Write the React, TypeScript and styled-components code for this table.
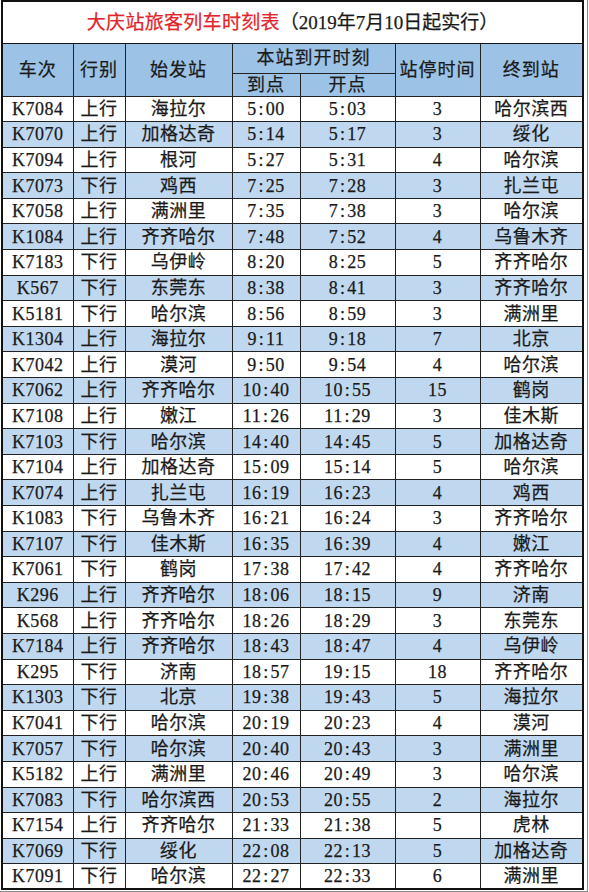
import React from 'react';
import styled, { createGlobalStyle } from 'styled-components';

type Train = [string, string, string, string, string, string, string];

const trains: Train[] = [
  ['K7084', '上行', '海拉尔', '5:00', '5:03', '3', '哈尔滨西'],
  ['K7070', '上行', '加格达奇', '5:14', '5:17', '3', '绥化'],
  ['K7094', '上行', '根河', '5:27', '5:31', '4', '哈尔滨'],
  ['K7073', '下行', '鸡西', '7:25', '7:28', '3', '扎兰屯'],
  ['K7058', '上行', '满洲里', '7:35', '7:38', '3', '哈尔滨'],
  ['K1084', '上行', '齐齐哈尔', '7:48', '7:52', '4', '乌鲁木齐'],
  ['K7183', '下行', '乌伊岭', '8:20', '8:25', '5', '齐齐哈尔'],
  ['K567', '下行', '东莞东', '8:38', '8:41', '3', '齐齐哈尔'],
  ['K5181', '下行', '哈尔滨', '8:56', '8:59', '3', '满洲里'],
  ['K1304', '上行', '海拉尔', '9:11', '9:18', '7', '北京'],
  ['K7042', '上行', '漠河', '9:50', '9:54', '4', '哈尔滨'],
  ['K7062', '上行', '齐齐哈尔', '10:40', '10:55', '15', '鹤岗'],
  ['K7108', '上行', '嫩江', '11:26', '11:29', '3', '佳木斯'],
  ['K7103', '下行', '哈尔滨', '14:40', '14:45', '5', '加格达奇'],
  ['K7104', '上行', '加格达奇', '15:09', '15:14', '5', '哈尔滨'],
  ['K7074', '上行', '扎兰屯', '16:19', '16:23', '4', '鸡西'],
  ['K1083', '下行', '乌鲁木齐', '16:21', '16:24', '3', '齐齐哈尔'],
  ['K7107', '下行', '佳木斯', '16:35', '16:39', '4', '嫩江'],
  ['K7061', '下行', '鹤岗', '17:38', '17:42', '4', '齐齐哈尔'],
  ['K296', '上行', '齐齐哈尔', '18:06', '18:15', '9', '济南'],
  ['K568', '上行', '齐齐哈尔', '18:26', '18:29', '3', '东莞东'],
  ['K7184', '上行', '齐齐哈尔', '18:43', '18:47', '4', '乌伊岭'],
  ['K295', '下行', '济南', '18:57', '19:15', '18', '齐齐哈尔'],
  ['K1303', '下行', '北京', '19:38', '19:43', '5', '海拉尔'],
  ['K7041', '下行', '哈尔滨', '20:19', '20:23', '4', '漠河'],
  ['K7057', '下行', '哈尔滨', '20:40', '20:43', '3', '满洲里'],
  ['K5182', '上行', '满洲里', '20:46', '20:49', '3', '哈尔滨'],
  ['K7083', '下行', '哈尔滨西', '20:53', '20:55', '2', '海拉尔'],
  ['K7154', '上行', '齐齐哈尔', '21:33', '21:38', '5', '虎林'],
  ['K7069', '下行', '绥化', '22:08', '22:13', '5', '加格达奇'],
  ['K7091', '下行', '哈尔滨', '22:27', '22:33', '6', '满洲里'],
];

const colWidths = [71, 52, 107, 68, 95, 85, 103];

const Time = ({ value }: { value: string }) => {
  const [h, m] = value.split(':');
  return (
    <>
      {h}
      <Colon>:</Colon>
      {m}
    </>
  );
};

const App = () => {
  return (
    <Frame>
      <GlobalStyle />
      <Sheet>
        <colgroup>
          {colWidths.map((w, i) => (
            <col key={i} style={{ width: w }} />
          ))}
        </colgroup>
        <thead>
          <TitleRow>
            <TitleCell colSpan={7}>
              <Red>大庆站旅客列车时刻表</Red>（2019年7月10日起实行）
            </TitleCell>
          </TitleRow>
          <HeadRow $tall>
            <HeadCell rowSpan={2}>车次</HeadCell>
            <HeadCell rowSpan={2}>行别</HeadCell>
            <HeadCell rowSpan={2}>始发站</HeadCell>
            <HeadCell colSpan={2}>本站到开时刻</HeadCell>
            <HeadCell rowSpan={2}>站停时间</HeadCell>
            <HeadCell rowSpan={2}>终到站</HeadCell>
          </HeadRow>
          <HeadRow>
            <HeadCell>到点</HeadCell>
            <HeadCell>开点</HeadCell>
          </HeadRow>
        </thead>
        <tbody>
          {trains.map((t, i) => (
            <Row key={t[0]} $shaded={i % 2 === 1}>
              <Cell>{t[0]}</Cell>
              <Cell>{t[1]}</Cell>
              <Cell>{t[2]}</Cell>
              <Cell><Time value={t[3]} /></Cell>
              <Cell><Time value={t[4]} /></Cell>
              <Cell>{t[5]}</Cell>
              <Cell>{t[6]}</Cell>
            </Row>
          ))}
        </tbody>
      </Sheet>
    </Frame>
  );
};

const GlobalStyle = createGlobalStyle`
  html, body {
    margin: 0;
    padding: 0;
    background: #fff;
  }
  body {
    font-family: "Liberation Serif", "Noto Sans CJK SC", serif;
    color: #1a1a1a;
  }
`;

const Frame = styled.div`
  width: 585px;
  padding: 0 2px 1px 0;
  border-right: 1px solid #8a8a8a;
  border-bottom: 1px solid #8a8a8a;
`;

const Sheet = styled.table`
  width: 583px;
  table-layout: fixed;
  border-collapse: collapse;
  border: 2px solid #111;
  margin-left: 1px;
  font-size: 18px;
  -webkit-text-stroke: 0.25px currentColor;
`;

const TitleRow = styled.tr`
  height: 42px;
`;

const TitleCell = styled.th`
  font-weight: normal;
  font-size: 19px;
  text-align: center;
  padding: 0 0 4px 0;
  border-bottom: 1px solid #111;
  color: #1a1a1a;
  white-space: nowrap;
`;

const Red = styled.span`
  color: #e3242b;
  letter-spacing: 0.3px;
`;

const HeadRow = styled.tr<{ $tall?: boolean }>`
  height: ${({ $tall }) => ($tall ? '30px' : '23px')};
  background: #9cc3e6;
`;

const HeadCell = styled.th`
  font-weight: normal;
  border: 1px solid #222;
  text-align: center;
  padding: 0;
  line-height: 1;
  letter-spacing: 1px;
`;

const Row = styled.tr<{ $shaded: boolean }>`
  height: 25.6px;
  background: ${({ $shaded }) => ($shaded ? '#c0d8ef' : '#fff')};
`;

const Cell = styled.td`
  border: 1px solid #222;
  text-align: center;
  padding: 0;
  line-height: 1;
  white-space: nowrap;
  letter-spacing: 0.5px;
`;

const Colon = styled.span`
  display: inline-block;
  width: 9px;
  text-align: center;
`;

export default App;
